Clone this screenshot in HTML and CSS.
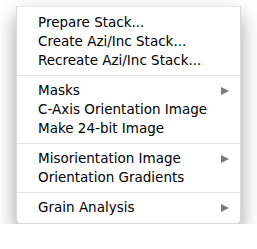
FILE: index.html
```html
<!DOCTYPE HTML>
<html>

<head>
  <title>Context Menu</title>
  <meta name="viewport" content="width=device-width, initial-scale=1.0">
  <link rel="stylesheet" href="styles.css">
</head>

<body>
  <div class="menu">
    <div class="item">Prepare Stack...</div>
    <div class="item">Create Azi/Inc Stack...</div>
    <div class="item">Recreate Azi/Inc Stack...</div>

    <div class="sep"></div>

    <div class="item sub">Masks <span class="arrow"></span></div>
    <div class="item">C-Axis Orientation Image</div>
    <div class="item">Make 24-bit Image</div>

    <div class="sep"></div>

    <div class="item sub">Misorientation Image <span class="arrow"></span></div>
    <div class="item">Orientation Gradients</div>

    <div class="sep"></div>

    <div class="item sub">Grain Analysis <span class="arrow"></span></div>
  </div>
</body>

</html>
```

FILE: styles.css
```css
html {
  font-family: "DejaVu Sans", "Liberation Sans", sans-serif;
}

body {
  margin: 0;
  background-color: white;
}

/* -------------------------------- MENU ------------------------------- */

.menu {
  margin: 6px 0 0 16px;
  width: 223px;
  padding: 6px 0 6px 0;
  background-color: white;
  border: 1px solid #d8d8d8;
  border-top-color: #e6e6e6;
  border-radius: 0 0 5px 5px;
  box-shadow: 0 10px 20px rgba(0, 0, 0, .38);
}

.item {
  display: flex;
  justify-content: space-between;
  align-items: center;
  padding: 0 11px 0 21px;
  font-size: 13.5px;
  line-height: 19px;
  color: #000;
}

.sep {
  height: 1px;
  margin: 5px 0;
  background-color: #e2e2e2;
}

/* ------------------------------- ARROW ------------------------------- */

.arrow {
  width: 0;
  height: 0;
  border-top: 4.5px solid transparent;
  border-bottom: 4.5px solid transparent;
  border-left: 8px solid #7a7a7a;
}
```
